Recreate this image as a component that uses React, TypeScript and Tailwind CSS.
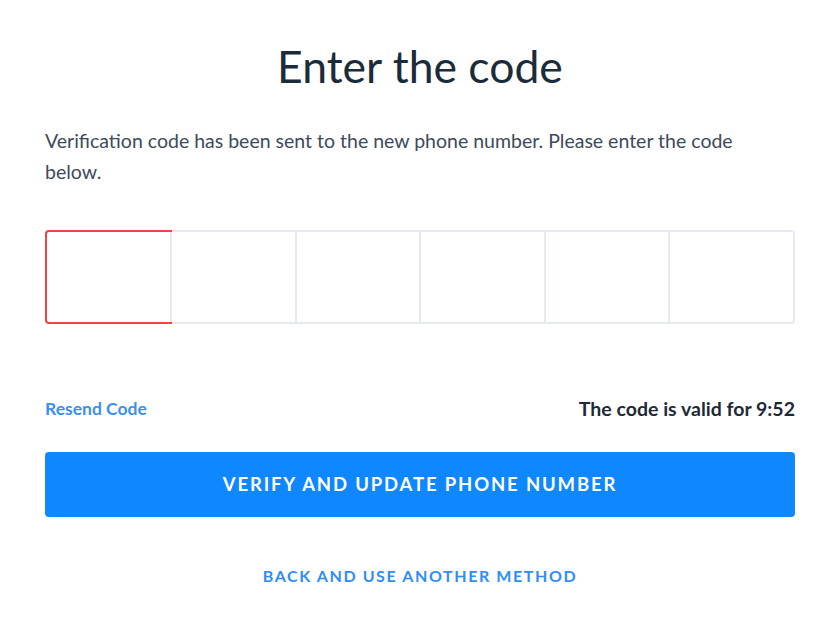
import React from "react";

const font = { fontFamily: "Lato, 'Noto Sans', sans-serif" };

export default function App() {
  const boxes = [0, 1, 2, 3, 4, 5];
  return (
    <div className="min-h-screen bg-white" style={font}>
      <div className="ml-[45px] w-[750px] pt-[37px]">
        <h1 className="text-center text-[44.5px] leading-[58px] text-[#1c2b3a]">Enter the code</h1>

        <p className="mt-[30px] max-w-[705px] text-[19.5px] leading-[31px] text-[#3e4a5b]">
          Verification code has been sent to the new phone number. Please enter the code below.
        </p>

        <div className="mt-[43px] flex h-[94px] rounded-[4px] border-2 border-[#e6eaf0]">
          {boxes.map((i) => (
            <div
              key={i}
              className={
                i === 0
                  ? "-m-[2px] w-[127px] rounded-l-[4px] border-2 border-[#ef4444]"
                  : "flex-1 border-l-2 border-[#e6eaf0]"
              }
            />
          ))}
        </div>

        <div className="mt-[70px] flex items-center justify-between">
          <a className="text-[17.5px] font-bold text-[#3b8ff0]">Resend Code</a>
          <span className="text-[19.5px] font-bold text-[#1f2a37]">The code is valid for 9:52</span>
        </div>

        <button className="mt-[29px] flex h-[65px] w-full items-center justify-center rounded-[4px] bg-[#0e87ff] text-[18.5px] font-bold tracking-[0.1em] text-white">
          VERIFY AND UPDATE PHONE NUMBER
        </button>

        <div className="mt-[47px] text-center">
          <a className="text-[16px] font-bold tracking-[0.1em] text-[#2f8df7]">BACK AND USE ANOTHER METHOD</a>
        </div>
      </div>
    </div>
  );
}
